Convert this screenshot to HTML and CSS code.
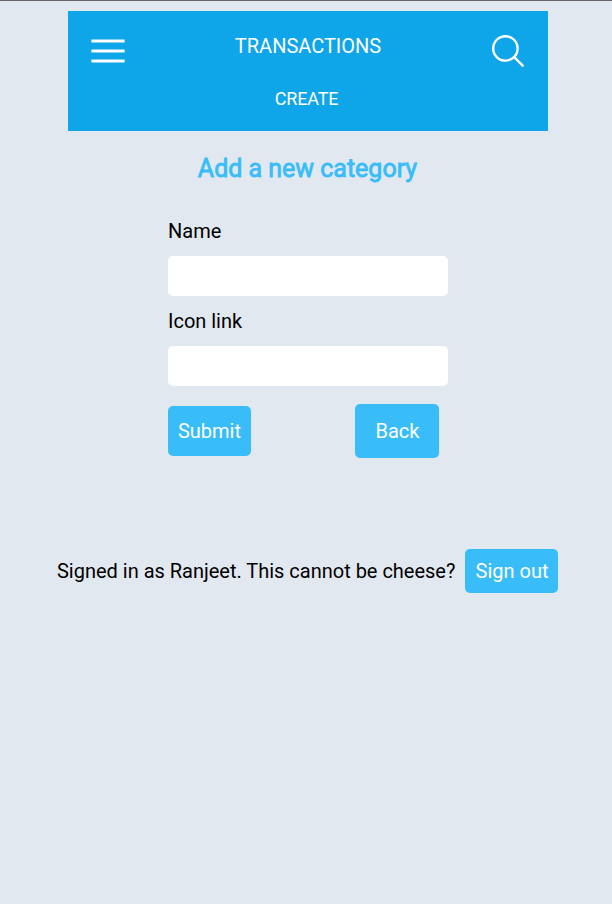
FILE: index.html
```html
<!DOCTYPE html>
<html lang="en">
<head>
<meta charset="utf-8">
<title>Add a new category</title>
<link rel="stylesheet" href="styles.css">
</head>
<body>
<header class="header">
  <svg class="menu" viewBox="0 0 34 26"><path d="M.4 3h33.2M.4 13h33.2M.4 23h33.2"/></svg>
  <nav class="nav"><span>TRANSACTIONS</span><span class="create">CREATE</span></nav>
  <svg class="search" viewBox="0 0 34 34"><circle cx="14.4" cy="14.4" r="12.2"/><path d="M23.2 23.2l8.5 8.5"/></svg>
</header>
<main>
  <h1 class="title">Add a new category</h1>
  <form class="form">
    <label for="name">Name</label>
    <input id="name" type="text">
    <label for="icon">Icon link</label>
    <input id="icon" type="text">
    <div class="actions">
      <button class="btn submit" type="button">Submit</button>
      <button class="btn back" type="button">Back</button>
    </div>
  </form>
</main>
<footer class="footer">
  <span class="signed">Signed in as Ranjeet. This cannot be cheese?</span>
  <button class="btn signout" type="button">Sign out</button>
</footer>
</body>
</html>
```
FILE: styles.css
```css
* { box-sizing: border-box; }
body {
  margin: 0;
  min-height: 904px;
  padding-top: 10px;
  border-top: 1px solid #656366;
  background: #e2e8f0;
  color: #000;
  font: 20px/30px Roboto, sans-serif;
  letter-spacing: -0.01px;
}
.header {
  display: flex;
  justify-content: space-between;
  width: 480px;
  height: 120px;
  margin: 0 64px 0 68px;
  padding: 23px 23px 0;
  background: #0ea5e9;
  color: #fff;
}
.header svg { fill: none; stroke: #fff; }
.menu { width: 34px; height: 26px; margin-top: 4px; stroke-width: 3; }
.search { width: 34px; height: 34px; stroke-width: 2.4; stroke-linecap: round; }
.nav {
  display: flex;
  flex-direction: column;
  align-items: center;
  gap: 23px;
  margin-top: -3px;
}
.create {
  margin-right: 3px;
  font-size: 18px;
  letter-spacing: -0.2px;
}
.title {
  margin: 22px 0 0 3px;
  color: #38bdf8;
  font-size: 25px;
  font-weight: 400;
  line-height: 32px;
  text-align: center;
  -webkit-text-stroke: 0.8px #38bdf8;
}
.form {
  display: flex;
  flex-direction: column;
  width: 280px;
  margin: 31px 0 0 168px;
}
.form input {
  height: 40px;
  margin: 10px 0;
  border: 0;
  border-radius: 5px;
  background: #fff;
}
.actions {
  display: flex;
  align-items: center;
  justify-content: space-between;
  margin-top: 8px;
  padding-right: 9px;
}
.btn {
  padding: 0;
  border: 0;
  border-radius: 5px;
  background: #38bdf8;
  color: #fff;
  font: inherit;
}
.submit { width: 83px; height: 50px; }
.back { width: 84px; height: 54px; padding-left: 1px; }
.footer {
  display: flex;
  align-items: center;
  gap: 10px;
  margin: 91px 0 0 57px;
  white-space: nowrap;
}
.signed { width: 398px; }
.signout { width: 93px; height: 44px; padding-left: 1px; }
```
